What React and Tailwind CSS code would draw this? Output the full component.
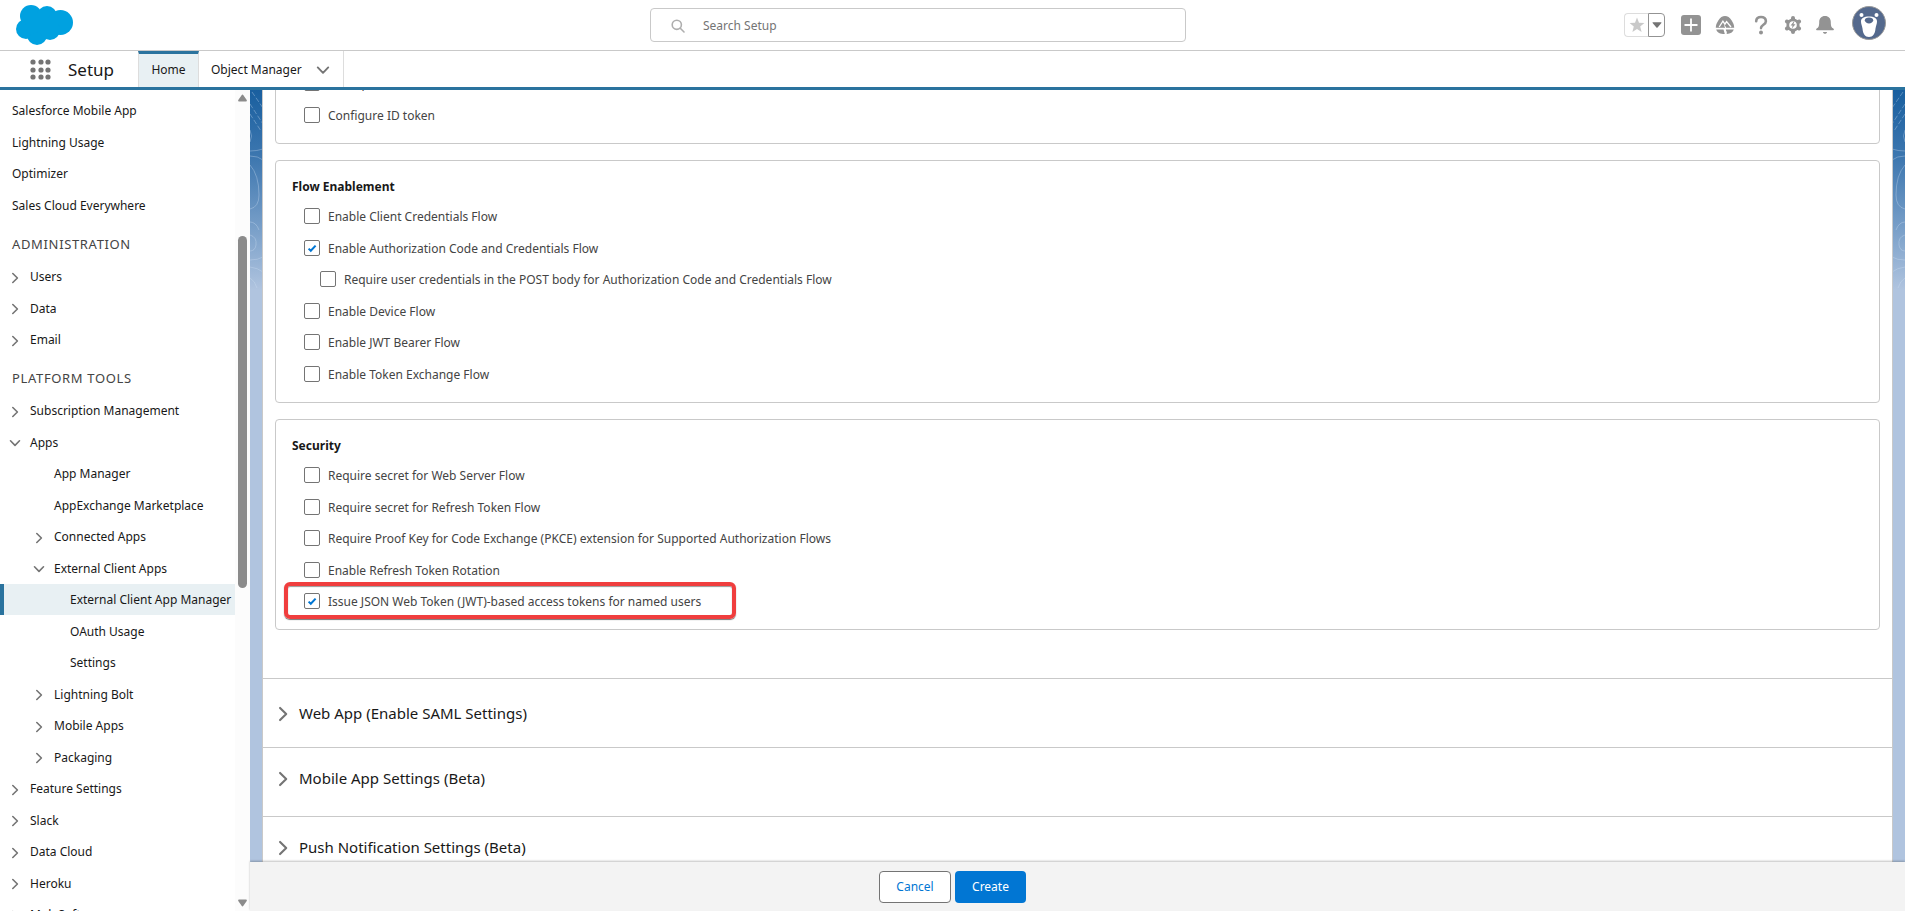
import React, { useState } from 'react';

const quickLinks = [
    { label: 'Salesforce Mobile App' },
    { label: 'Lightning Usage' },
    { label: 'Optimizer' },
    { label: 'Sales Cloud Everywhere' },
];

const administration = [
    { label: 'Users', level: 1, icon: 'right' },
    { label: 'Data', level: 1, icon: 'right' },
    { label: 'Email', level: 1, icon: 'right' },
];

const platformTools = [
    { label: 'Subscription Management', level: 1, icon: 'right' },
    { label: 'Apps', level: 1, icon: 'down' },
    { label: 'App Manager', level: 2 },
    { label: 'AppExchange Marketplace', level: 2 },
    { label: 'Connected Apps', level: 2, icon: 'right' },
    { label: 'External Client Apps', level: 2, icon: 'down' },
    { label: 'External Client App Manager', level: 3, active: true },
    { label: 'OAuth Usage', level: 3 },
    { label: 'Settings', level: 3 },
    { label: 'Lightning Bolt', level: 2, icon: 'right' },
    { label: 'Mobile Apps', level: 2, icon: 'right' },
    { label: 'Packaging', level: 2, icon: 'right' },
    { label: 'Feature Settings', level: 1, icon: 'right' },
    { label: 'Slack', level: 1, icon: 'right' },
    { label: 'Data Cloud', level: 1, icon: 'right' },
    { label: 'Heroku', level: 1, icon: 'right' },
    { label: 'MuleSoft', level: 1, icon: 'right' },
];

const tokenOptions = [
    { id: 'introspect', label: 'Introspect All Tokens' },
    { id: 'idToken', label: 'Configure ID token' },
];

const flowOptions = [
    { id: 'clientCredentials', label: 'Enable Client Credentials Flow' },
    { id: 'authCode', label: 'Enable Authorization Code and Credentials Flow', checked: true },
    { id: 'postBody', label: 'Require user credentials in the POST body for Authorization Code and Credentials Flow', nested: true },
    { id: 'device', label: 'Enable Device Flow' },
    { id: 'jwtBearer', label: 'Enable JWT Bearer Flow' },
    { id: 'tokenExchange', label: 'Enable Token Exchange Flow' },
];

const securityOptions = [
    { id: 'secretWeb', label: 'Require secret for Web Server Flow' },
    { id: 'secretRefresh', label: 'Require secret for Refresh Token Flow' },
    { id: 'pkce', label: 'Require Proof Key for Code Exchange (PKCE) extension for Supported Authorization Flows' },
    { id: 'rotation', label: 'Enable Refresh Token Rotation' },
    { id: 'jwtTokens', label: 'Issue JSON Web Token (JWT)-based access tokens for named users', checked: true, highlight: true },
];

const sections = [
    'Web App (Enable SAML Settings)',
    'Mobile App Settings (Beta)',
    'Push Notification Settings (Beta)',
];

const indent = { 1: 'pl-[30px]', 2: 'pl-[54px]', 3: 'pl-[70px]' };
const iconLeft = { 1: 'left-[9px]', 2: 'left-[33px]' };

const Chevron = ({ down, size = 12, className = '' }) => (
    <svg width={size} height={size} viewBox="0 0 12 12" fill="none" stroke="#747474" strokeWidth="1.6" strokeLinecap="round" strokeLinejoin="round" className={className}>
        <path d={down ? 'M1.5 3.8 6 8.4 10.5 3.8' : 'M3.8 1.5 8.4 6 3.8 10.5'} />
    </svg>
);

const NavList = ({ items }) => (
    <ul>
        {items.map((item) => (
            <li key={item.label} className="h-[31px] even:h-8">
                <a
                    href="#"
                    className={`relative flex h-full items-center pt-px whitespace-nowrap text-[#181818] ${indent[item.level] || 'pl-3'} ${item.active ? 'bg-[#e8f0f3] shadow-[inset_4px_0_0_#2a739e]' : ''}`}
                >
                    {item.icon && <Chevron down={item.icon === 'down'} className={`absolute top-[11px] ${iconLeft[item.level]}`} />}
                    {item.label}
                </a>
            </li>
        ))}
    </ul>
);

const NavHeading = ({ children }) => (
    <h2 className="h-10 pt-[13px] pl-3 text-[13px] leading-5 tracking-wider text-[#444]">{children}</h2>
);

const CheckRow = ({ option }) => {
    const [checked, setChecked] = useState(!!option.checked);

    return (
        <div className={`relative h-8 pt-2 even:h-[31px] ${option.nested ? 'pl-7' : 'pl-3'}`}>
            <label className="inline-flex h-4 items-center gap-2 whitespace-nowrap text-[#444]">
                <span className="relative h-4 w-4">
                    <input
                        type="checkbox"
                        checked={checked}
                        onChange={(e) => setChecked(e.target.checked)}
                        className="block h-4 w-4 appearance-none rounded-xs border border-[#747474] bg-white"
                    />
                    {checked && (
                        <svg viewBox="0 0 16 16" className="pointer-events-none absolute inset-0" fill="none" stroke="#0176d3" strokeWidth="2">
                            <path d="M4.6 8.6 6.8 10.8 11.6 5.6" />
                        </svg>
                    )}
                </span>
                <span className="pt-px">{option.label}</span>
            </label>
            {option.highlight && (
                <span className="pointer-events-none absolute -top-[3px] -left-2 h-[37px] w-[452px] rounded-md border-4 border-[#f03e3e] shadow-[0_1px_1px_#777,inset_0_1px_1px_#999]" />
            )}
        </div>
    );
};

const OptionCard = ({ title, options, className = '' }) => (
    <fieldset className={`mx-3 rounded border border-[#c9c9c9] px-4 ${className}`}>
        {title && <h3 className="mb-[3px] pt-4 leading-5 font-bold text-[#181818]">{title}</h3>}
        <div>
            {options.map((option) => (
                <CheckRow key={option.id} option={option} />
            ))}
        </div>
    </fieldset>
);

const ContourLines = ({ className }) => (
    <svg viewBox="0 0 13 200" className={`absolute top-0 h-[200px] w-[13px] ${className}`} fill="none" stroke="#cfe0f3" strokeOpacity="0.35" strokeWidth="1">
        <path d="M2 2 13 18M0 14l13 20M0 24l11 17" strokeDasharray="5 2" />
        <path d="M0 40q3 6 0 12M0 61q7 0 13-2M0 66q8 0 13 4" />
        <path d="M0 75q9 10 9 30 0 12-9 14M0 132q6 0 9 8" />
        <path d="M0 145q7 2 6 10-1 6-6 6M0 170q8 0 13-3M0 177q8 1 13 5M0 188q5 3 7 10" />
    </svg>
);

const HeaderIcons = () => (
    <div className="flex items-center justify-end pr-[19px] text-[#939393]">
        <div className="mr-4 flex h-6 w-[41px]">
            <button type="button" aria-label="Add favorite" className="flex w-6 items-center justify-center rounded-l border border-r-0 border-[#dddddd]">
                <svg width="16" height="16" viewBox="0 0 16 16" fill="#c9c9c9">
                    <path d="m8 .6 2 5.2 5.4.3-4.2 3.5 1.4 5.4L8 12l-4.6 3 1.4-5.4L.6 6.1 6 5.8z" />
                </svg>
            </button>
            <button type="button" aria-label="View favorites" className="flex flex-1 items-center justify-center rounded-r border border-[#939393]">
                <svg width="10" height="6" viewBox="0 0 10 6" fill="#747474">
                    <path d="M1 .3h8q.8 0 .4.7L5.6 5.4q-.6.6-1.2 0L.6 1Q.2.3 1 .3z" />
                </svg>
            </button>
        </div>
        <button type="button" aria-label="Global actions" className="mr-[14px]">
            <svg width="20" height="20" viewBox="0 0 20 20">
                <rect width="20" height="20" rx="3" fill="#939393" />
                <path d="M10 3.5v13M3.5 10h13" stroke="#fff" strokeWidth="1.8" />
            </svg>
        </button>
        <button type="button" aria-label="Guidance center" className="mr-[19px]">
            <svg width="20" height="20" viewBox="0 0 20 20" fill="#939393">
                <path d="M10 1c2.5 0 4.8 1.4 6.7 4.5 1.7 2.7 2.4 4.5 2.5 7.3H.8c.1-2.8.8-4.6 2.500-7.300C5.200 2.400 7.500 1 10 1z" />
                <path d="M1.200 14.600h7.300l1.300 4.500C5.200 19.100 2 17.700 1.200 14.600zM10.800 14.600h8c-.8 2.800-3.300 4.300-7 4.500l-.2-1.600z" />
                <path d="m4.200 12 3.700-5.800 2 3 1.700-2.600 4.400 5.400" fill="none" stroke="#fff" strokeWidth="1.3" />
                <path d="m9.500 10.500 1.300 2.500-1.300 1.500 2 3" fill="none" stroke="#fff" strokeWidth="1" />
            </svg>
        </button>
        <button type="button" aria-label="Help" className="mr-4">
            <svg width="14" height="20" viewBox="0 0 14 20" fill="none" stroke="#939393" strokeWidth="2.6" strokeLinecap="round">
                <path d="M2.200 6.300C2.200 3.500 4.200 2 7 2s4.900 1.600 4.900 4.200c0 3.500-4.900 3.600-4.900 6.900" />
                <circle cx="7" cy="17.4" r="2" fill="#939393" stroke="none" />
            </svg>
        </button>
        <button type="button" aria-label="Setup" className="mr-[14px]">
            <svg width="18" height="20" viewBox="0 0 18 20" fill="#939393">
                <g stroke="#939393" strokeWidth="4" strokeLinecap="round">
                    <path d="M9 3v14M2.900 6.500l12.200 7M2.900 13.500l12.200-7" />
                </g>
                <circle cx="9" cy="10" r="6.6" />
                <circle cx="9" cy="10" r="3.8" fill="#fff" />
                <path d="M9.800 6.600 6.600 10.600h2L7.800 13.500l3.700-4.300H9.400l1-2.600z" />
            </svg>
        </button>
        <button type="button" aria-label="Notifications" className="mr-[18px]">
            <svg width="18" height="20" viewBox="0 0 18 20" fill="#939393">
                <path d="M9 1c3.600 0 5.800 2.600 5.800 6 0 4 .6 5.500 2.500 6.500.9.500.8 1.700-.2 1.700H.9c-1 0-1.100-1.200-.2-1.700C2.600 12.500 3.200 11 3.200 7c0-3.400 2.200-6 5.800-6zM7 17h4c0 2.400-4 2.400-4 0z" />
            </svg>
        </button>
        <button type="button" aria-label="View profile" className="-mt-1">
            <svg width="34" height="34" viewBox="0 0 34 34">
                <circle cx="17" cy="17" r="16.5" fill="#54698d" stroke="#9a9a9a" />
                <circle cx="9.5" cy="9" r="2" fill="#fff" />
                <circle cx="24.5" cy="9" r="2" fill="#fff" />
                <path d="M17 10.500c5 0 8 1.500 8 5 0 2.500-1 4-1.500 7C23 28 21 31 17 31s-6-3-6.500-8.500c-.5-3-1.500-4.500-1.500-7 0-3.500 3-5 8-5z" fill="#fff" />
                <path d="M17 11.500c2.500 0 4.200 1 4.200 2.700S19 17.500 17 17.500s-4.200-1.600-4.200-3.300 1.700-2.700 4.200-2.700z" fill="#54698d" />
            </svg>
        </button>
    </div>
);

const App = () => {
    return (
        <div className="flex h-screen flex-col overflow-hidden bg-white font-['Noto_Sans','Open_Sans',sans-serif] text-xs text-[#181818]">
            {/* Global header */}
            <header className="grid h-[51px] shrink-0 grid-cols-[650fr_536fr_719fr] items-center border-b border-[#c9c9c9]">
                <svg width="57" height="40" viewBox="16 5 57 40" fill="#00a1e0" className="ml-4">
                    <circle cx="31" cy="16" r="11" />
                    <circle cx="47" cy="16" r="10" />
                    <circle cx="60.5" cy="22.5" r="12.5" />
                    <circle cx="26" cy="29" r="10" />
                    <circle cx="37" cy="35" r="10" />
                    <circle cx="50" cy="30" r="10" />
                    <path d="M24 18h34v12H42L28 36z" />
                </svg>
                <div className="relative">
                    <svg width="14" height="14" viewBox="0 0 14 14" fill="none" stroke="#aeaeae" strokeWidth="1.6" strokeLinecap="round" className="absolute top-[11px] left-[21px]">
                        <circle cx="5.8" cy="5.8" r="4.6" />
                        <path d="m9.300 9.300 3.700 3.700" />
                    </svg>
                    <input
                        type="search"
                        aria-label="Search Setup"
                        placeholder="Search Setup"
                        className="block h-[34px] w-full rounded border border-[#c9c9c9] pr-4 pl-[52px] placeholder:text-[#747474]"
                    />
                </div>
                <HeaderIcons />
            </header>

            {/* App navigation */}
            <nav className="flex h-[39px] shrink-0 border-b-3 border-[#2a739e]">
                <button type="button" aria-label="App Launcher" className="ml-[30px]">
                    <svg width="21" height="21" viewBox="0 0 21 21" fill="#747474">
                        {[3, 11, 18].map((y) => [3, 11, 18].map((x) => <circle key={`${x}-${y}`} cx={x} cy={y} r="2.6" />))}
                    </svg>
                </button>
                <span className="flex w-[87px] items-center pt-0.5 pl-[17px] text-[17px]">Setup</span>
                <a href="#" className="flex w-[61px] items-center justify-center border-x border-t-3 border-x-[#dddddd] border-t-[#2a739e] bg-[#e8f0f3] pb-px">Home</a>
                <a href="#" className="flex items-center gap-[14px] border-r border-[#dddddd] pt-0.5 pr-[13px] pl-3">
                    Object Manager
                    <Chevron down size={14} />
                </a>
            </nav>

            <div className="flex min-h-0 flex-1">
                {/* Setup tree */}
                <aside className="flex w-[250px] shrink-0">
                    <div className="min-w-0 flex-1 overflow-hidden pt-[5px]">
                        <NavList items={quickLinks} />
                        <NavHeading>ADMINISTRATION</NavHeading>
                        <NavList items={administration} />
                        <NavHeading>PLATFORM TOOLS</NavHeading>
                        <NavList items={platformTools} />
                    </div>
                    <div className="flex w-[15px] flex-col items-center justify-between bg-[#fcfcfc] py-1">
                        <svg width="9" height="8" viewBox="0 0 9 8" fill="#8b8b8b">
                            <path d="M4.500.5Q5 .5 5.400 1.200L8.700 6q.6 1.500-.7 1.500H1Q-.3 7.500.3 6L3.600 1.200Q4 .5 4.500.5z" />
                        </svg>
                        <div className="mt-[134px] mb-auto h-[352px] w-[9px] rounded-full bg-[#8b8b8b]" />
                        <svg width="9" height="8" viewBox="0 0 9 8" fill="#8b8b8b">
                            <path d="M4.500 7.500Q5 7.500 5.400 6.800L8.700 2Q9.300.5 8 .5H1Q-.3.5.3 2l3.300 4.800q.4.700.9.700z" />
                        </svg>
                    </div>
                </aside>

                <div className="flex min-w-0 flex-1 flex-col">
                    <main className="relative min-h-0 flex-1 overflow-hidden bg-[#b0c4df] bg-[linear-gradient(to_bottom,#195f9f_0,#3f78b0_70px,#7aa0c9_140px,#b0c4df_200px)] px-3">
                        <ContourLines className="left-0" />
                        <ContourLines className="right-0 -scale-x-100" />
                        <div className="relative min-h-full border-x border-[#c9c9c9] bg-white">
                            <OptionCard options={tokenOptions} className="-mt-6 pb-[13px]" />
                            <OptionCard title="Flow Enablement" options={flowOptions} className="mt-4 pb-[13px]" />
                            <OptionCard title="Security" options={securityOptions} className="mt-4 mb-12 pb-3" />
                            {sections.map((title, i) => (
                                <section key={title} className={`h-[69px] border-t border-[#c9c9c9] pl-3 ${i === 0 ? 'pt-[22px]' : 'pt-[18px]'}`}>
                                    <button type="button" className="flex items-center gap-1 text-[15px] leading-6">
                                        <Chevron size={16} className="mt-0.5" />
                                        <span className="pl-1">{title}</span>
                                    </button>
                                </section>
                            ))}
                        </div>
                    </main>
                    <footer className="relative flex h-[49px] shrink-0 items-center justify-center gap-1 bg-[#f3f3f3] pr-[250px] shadow-[0_-1px_2px_rgba(0,0,0,0.25)]">
                        <button type="button" className="h-8 w-[72px] rounded border border-[#747474] bg-white text-[#0176d3]">Cancel</button>
                        <button type="button" className="h-8 w-[71px] rounded bg-[#0176d3] text-white">Create</button>
                    </footer>
                </div>
            </div>
        </div>
    );
};

export default App;
